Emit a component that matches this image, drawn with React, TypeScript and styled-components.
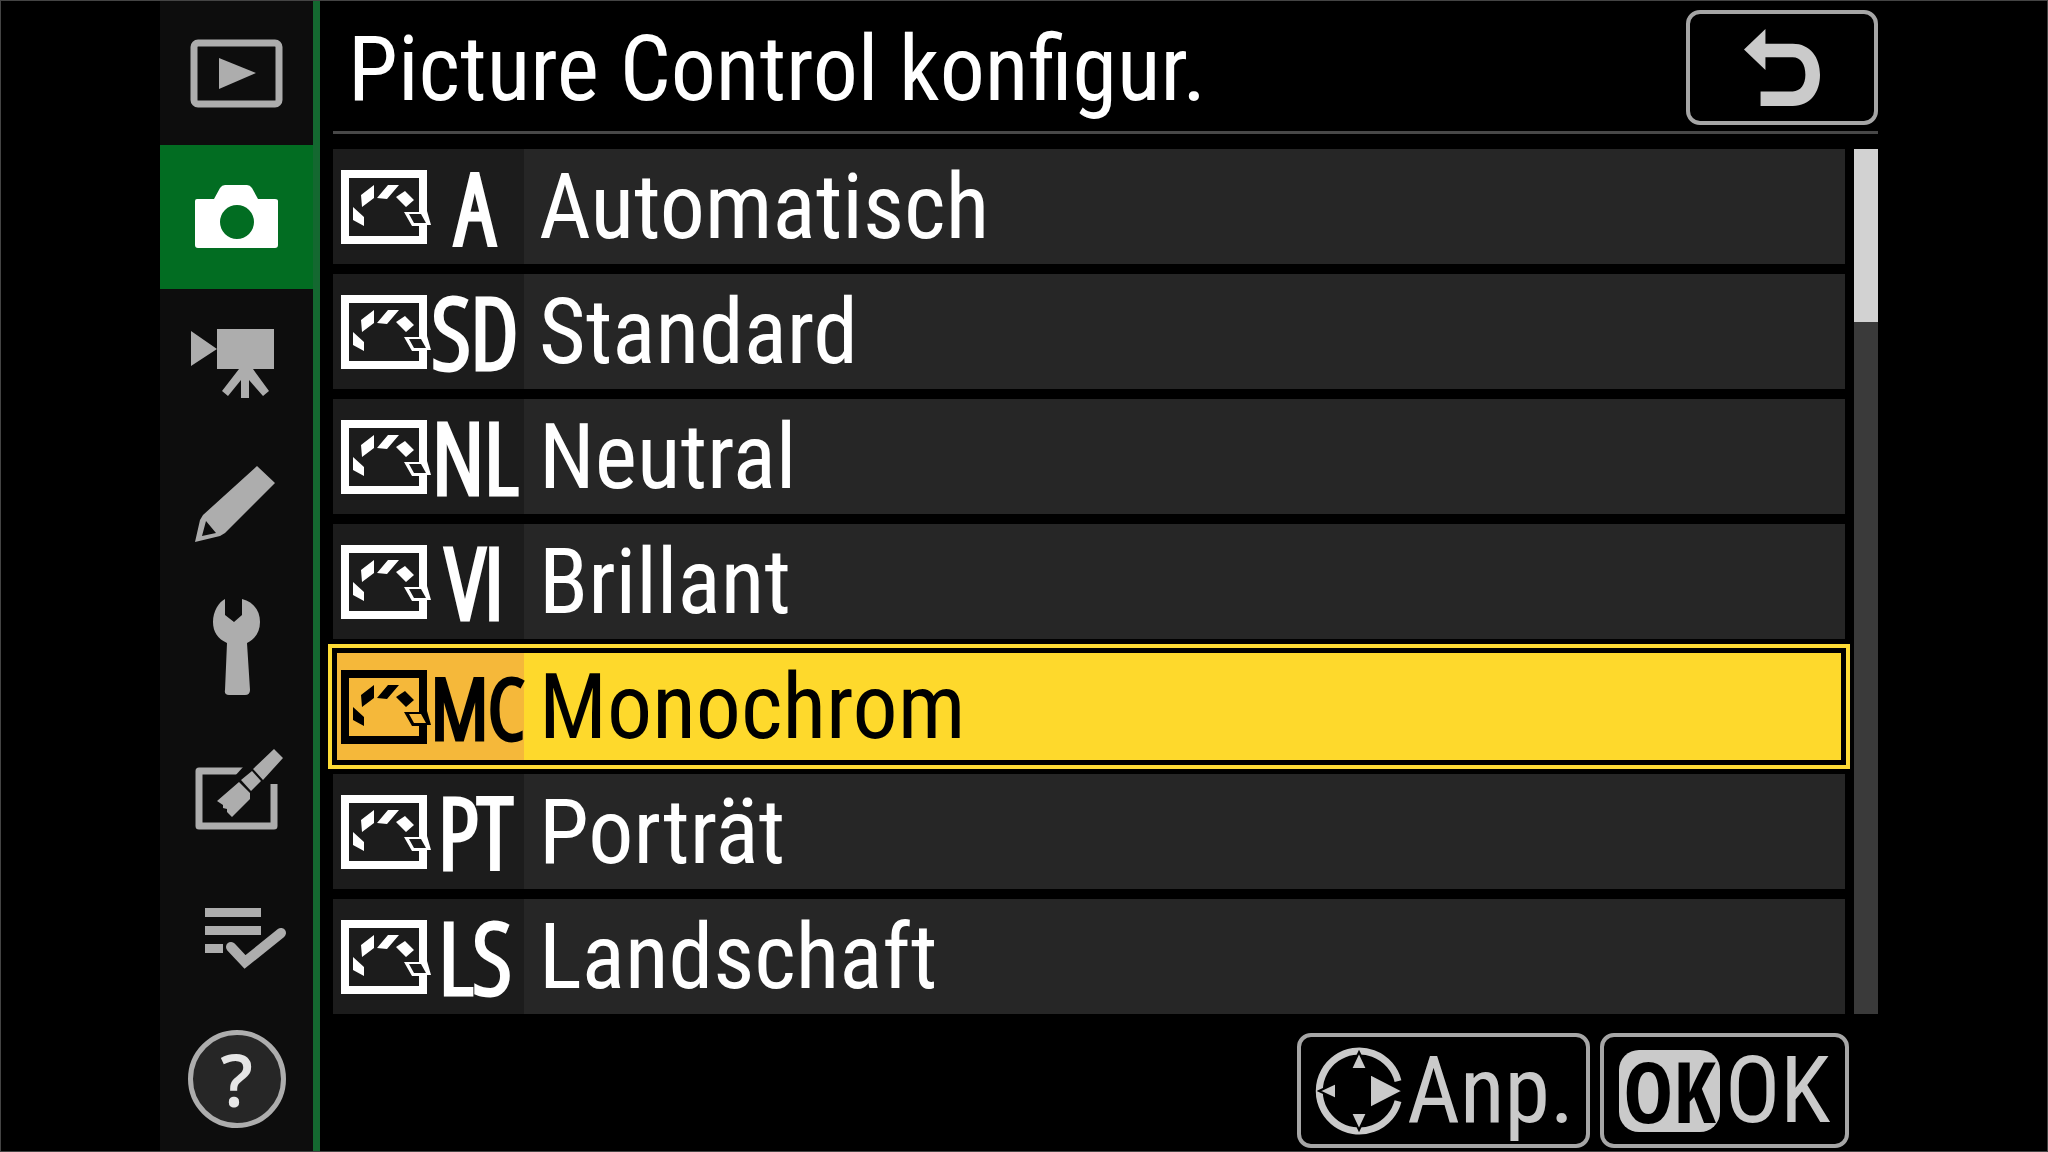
import React from "react";
import styled, { createGlobalStyle } from "styled-components";

const font = '"Roboto Condensed", "Arial Narrow", Roboto, sans-serif';
const codeFont = '"Open Sans Condensed Light", "Open Sans Condensed", "Open Sans", sans-serif';

const Global = createGlobalStyle`
  *, *::before, *::after { box-sizing: border-box; }
  html, body { margin: 0; background: #000; }
  body { font-family: ${font}; color: #fff; }
  button { font: inherit; color: inherit; background: none; border: 0; margin: 0; padding: 0; cursor: pointer; }
  svg { display: block; flex: none; overflow: visible; }
`;

const Screen = styled.div`
  display: flex;
  min-height: 100vh;
  padding: 0 169px 0 159px;
  background: #000;
  border: 1px solid #444;
`;

const Tabs = styled.nav`
  display: flex;
  flex-direction: column;
  flex: none;
  width: 160px;
  background: #0d0d0d;
  border-right: 7px solid #146830;
`;

const Tab = styled.button<{ $active?: boolean }>`
  display: flex;
  flex: 1;
  align-items: center;
  justify-content: center;
  color: ${(p) => (p.$active ? "#fff" : "#adadad")};
  background: ${(p) => (p.$active ? "#026d22" : "transparent")};
`;

const Help = styled.span`
  display: flex;
  align-items: center;
  justify-content: center;
  width: 98px;
  height: 98px;
  border: 5px solid #adadad;
  border-radius: 50%;
  background: #262626;
  color: #e6e6e6;
  font: 600 72px/88px "Open Sans", sans-serif;
`;

const Main = styled.main`
  display: flex;
  flex-direction: column;
  flex: 1;
  min-width: 0;
  padding-left: 13px;
`;

const Header = styled.header`
  display: flex;
  align-items: flex-start;
  justify-content: space-between;
  height: 133px;
  padding: 9px 0 0 15px;
  border-bottom: 3px solid #484848;
`;

const Title = styled.h1`
  margin: 0;
  font-size: 90px;
  line-height: 120px;
  font-weight: 400;
  white-space: nowrap;
`;

const BoxButton = styled.button<{ $width: number; $gap?: number }>`
  display: flex;
  align-items: center;
  justify-content: ${(p) => (p.$gap ? "flex-start" : "center")};
  gap: ${(p) => p.$gap ?? 0}px;
  width: ${(p) => p.$width}px;
  height: 115px;
  padding-left: ${(p) => (p.$gap ? 15 : 0)}px;
  border: 4px solid #a6a6a6;
  border-radius: 14px;
  color: #cacaca;
  font-size: 92px;
  line-height: 107px;
  white-space: nowrap;
`;

const Body = styled.div`
  display: flex;
  gap: 9px;
  margin-top: 15px;
`;

const List = styled.ul`
  display: flex;
  flex-direction: column;
  flex: 1;
  gap: 10px;
  margin: 0;
  padding: 0;
  list-style: none;
`;

const Row = styled.button<{ $selected: boolean }>`
  display: flex;
  width: 100%;
  height: 115px;
  text-align: left;
  color: ${(p) => (p.$selected ? "#000" : "#fff")};
  background: ${(p) => (p.$selected ? "#fed92c" : "#262626")};
  box-shadow: ${(p) =>
    p.$selected
      ? "inset 0 0 0 4px #000, 0 0 0 1px #000, 0 0 0 5px #fddb35"
      : "none"};
`;

const Mode = styled.span<{ $selected: boolean }>`
  display: flex;
  align-items: center;
  flex: none;
  width: 191px;
  padding-left: 8px;
  background: ${(p) => (p.$selected ? "#f5b83a" : "#1c1c1c")};
  box-shadow: ${(p) =>
    p.$selected ? "inset 4px 4px 0 #000, inset 0 -4px 0 #000" : "none"};
`;

const Code = styled.span<{ $wide: boolean }>`
  width: 88px;
  font: 400 ${(p) => (p.$wide ? 84 : 98)}px/115px ${codeFont};
  text-align: center;
  white-space: nowrap;
  -webkit-text-stroke: 5px currentColor;
`;

const Name = styled.span`
  padding-left: 15px;
  font-size: 90px;
  line-height: 117px;
  white-space: nowrap;
`;

const Track = styled.div`
  width: 24px;
  background: #3a3a3a;
`;

const Thumb = styled.div`
  height: 20%;
  background: #d2d2d2;
`;

const Footer = styled.footer`
  display: flex;
  justify-content: flex-end;
  gap: 10px;
  margin-top: 19px;
  padding-right: 29px;
`;

const OkBadge = styled.span`
  display: flex;
  align-items: center;
  justify-content: center;
  width: 101px;
  height: 82px;
  border-radius: 20px;
  background: #cacaca;
  color: #000;
  font: 700 84px/78px "Open Sans Condensed", "Open Sans", sans-serif;
`;

const PictureIcon = () => (
  <svg width="90" height="74" viewBox="0 0 90 74" fill="currentColor" aria-hidden="true">
    <path
      fillRule="evenodd"
      d="M0 0H86V41L90 55H86V74H0ZM8 8V66H78V56H71L63 42H78V8ZM68 44L73 53H85L80 44Z"
    />
    <path d="M12 37L23 47V56L12 50ZM20 25L33 15V28L21 37ZM36 28L47 15H58L46 29ZM55 27L64 21L73 30L65 37Z" />
  </svg>
);

const PlayIcon = () => (
  <svg width="100" height="100" viewBox="1 0 100 100" aria-hidden="true">
    <rect x="8" y="20" width="85" height="61" rx="4" fill="none" stroke="currentColor" strokeWidth="7" />
    <path d="M33 35L70 50L33 66Z" fill="currentColor" />
  </svg>
);

const CameraIcon = () => (
  <svg width="100" height="100" viewBox="1 0 100 100" aria-hidden="true">
    <path
      fill="currentColor"
      fillRule="evenodd"
      d="M9 34Q9 32 11 32H28L34 21Q36 18 39 18H61Q64 18 66 21L72 32H89Q92 32 92 34V78Q92 81 89 81H12Q9 81 9 78ZM51 38A17 17 0 1 0 51 72A17 17 0 1 0 51 38Z"
    />
  </svg>
);

const MovieIcon = () => (
  <svg width="100" height="100" viewBox="0 -5 100 100" aria-hidden="true">
    <path fill="currentColor" d="M4 16L30 34V14H87V54H66L82 76L76 81L62 65V83H54V65L41 81L35 76L52 54H30V34L4 51Z" />
  </svg>
);

const PencilIcon = () => (
  <svg width="100" height="100" viewBox="1 -5 100 100" aria-hidden="true">
    <path
      fill="currentColor"
      fillRule="evenodd"
      d="M71 7L89 24L39 74L34 77L9 83L14 61L17 56ZM20 62L16 77L30 74Z"
    />
  </svg>
);

const WrenchIcon = () => (
  <svg width="100" height="100" viewBox="1 0 100 100" aria-hidden="true">
    <path
      fill="currentColor"
      d="M39 1V17L48 24L56 17V1C68 4 74 13 74 24C74 34 69 41 61 45L64 92Q64 97 59 97H43Q38 97 39 92L41 45C32 41 27 34 27 24C27 13 33 4 39 1Z"
    />
  </svg>
);

const RetouchIcon = () => (
  <svg width="100" height="100" viewBox="1 -5 100 100" aria-hidden="true">
    <path d="M57 24H13V79H88V37" fill="none" stroke="currentColor" strokeWidth="7" strokeLinejoin="round" />
    <path d="M58 19V30H48Z" fill="#0d0d0d" />
    <path
      fill="currentColor"
      d="M88 2L97 11L77 33L67 22ZM66 24L75 34L65 44L55 33ZM53 35L64 46V52L46 70L41 65V62L37 61V58L31 54Z"
    />
  </svg>
);

const MenuCheckIcon = () => (
  <svg width="100" height="100" viewBox="1 -4 100 100" aria-hidden="true">
    <path fill="currentColor" d="M19 19H75V28H19ZM19 37H75V46H19ZM19 55H37V64H19Z" />
    <path
      d="M45 58L59 73L95 44"
      fill="none"
      stroke="currentColor"
      strokeWidth="10"
      strokeLinecap="round"
    />
  </svg>
);

const BackIcon = () => (
  <svg width="76" height="80" viewBox="0 0 78 80" aria-hidden="true">
    <path fill="currentColor" d="M0 21L22 0V15H50C68 15 78 29 78 47C78 65 68 79 50 79H17V64H50C58 64 63 57 63 47C63 36 58 29 50 29H22V42Z" />
  </svg>
);

const PadIcon = () => (
  <svg width="86" height="88" viewBox="0 0 86 88" aria-hidden="true">
    <path
      d="M82 34A40 40 0 1 0 82 54"
      fill="none"
      stroke="currentColor"
      strokeWidth="7"
    />
    <path
      fill="currentColor"
      stroke="#000"
      strokeWidth="2"
      d="M43 5L51 22H35ZM43 83L51 66H35ZM3 44L20 36V52ZM87 44L54 27V61Z"
    />
  </svg>
);

const tabs = [
  { label: "Wiedergabe", Icon: PlayIcon },
  { label: "Fotoaufnahme", Icon: CameraIcon, active: true },
  { label: "Videoaufnahme", Icon: MovieIcon },
  { label: "Individualfunktionen", Icon: PencilIcon },
  { label: "System", Icon: WrenchIcon },
  { label: "Bildbearbeitung", Icon: RetouchIcon },
  { label: "Mein Menü", Icon: MenuCheckIcon },
];

const controls = [
  ["A", "Automatisch"],
  ["SD", "Standard"],
  ["NL", "Neutral"],
  ["VI", "Brillant"],
  ["MC", "Monochrom"],
  ["PT", "Porträt"],
  ["LS", "Landschaft"],
];

export default function App() {
  const [selected, setSelected] = React.useState("MC");
  return (
    <>
      <Global />
      <Screen>
        <Tabs>
          {tabs.map(({ label, Icon, active }) => (
            <Tab key={label} aria-label={label} $active={active}>
              <Icon />
            </Tab>
          ))}
          <Tab aria-label="Hilfe">
            <Help>?</Help>
          </Tab>
        </Tabs>
        <Main>
          <Header>
            <Title>Picture Control konfigur.</Title>
            <BoxButton $width={192} aria-label="Zurück">
              <BackIcon />
            </BoxButton>
          </Header>
          <Body>
            <List>
              {controls.map(([code, name]) => (
                <li key={code}>
                  <Row
                    $selected={code === selected}
                    aria-pressed={code === selected}
                    onClick={() => setSelected(code)}
                  >
                    <Mode $selected={code === selected}>
                      <PictureIcon />
                      <Code $wide={code.includes("M")}>{code}</Code>
                    </Mode>
                    <Name>{name}</Name>
                  </Row>
                </li>
              ))}
            </List>
            <Track>
              <Thumb />
            </Track>
          </Body>
          <Footer>
            <BoxButton $width={293} $gap={5}>
              <PadIcon />
              <span>Anp.</span>
            </BoxButton>
            <BoxButton $width={249} $gap={5}>
              <OkBadge>OK</OkBadge>
              <span>OK</span>
            </BoxButton>
          </Footer>
        </Main>
      </Screen>
    </>
  );
}
